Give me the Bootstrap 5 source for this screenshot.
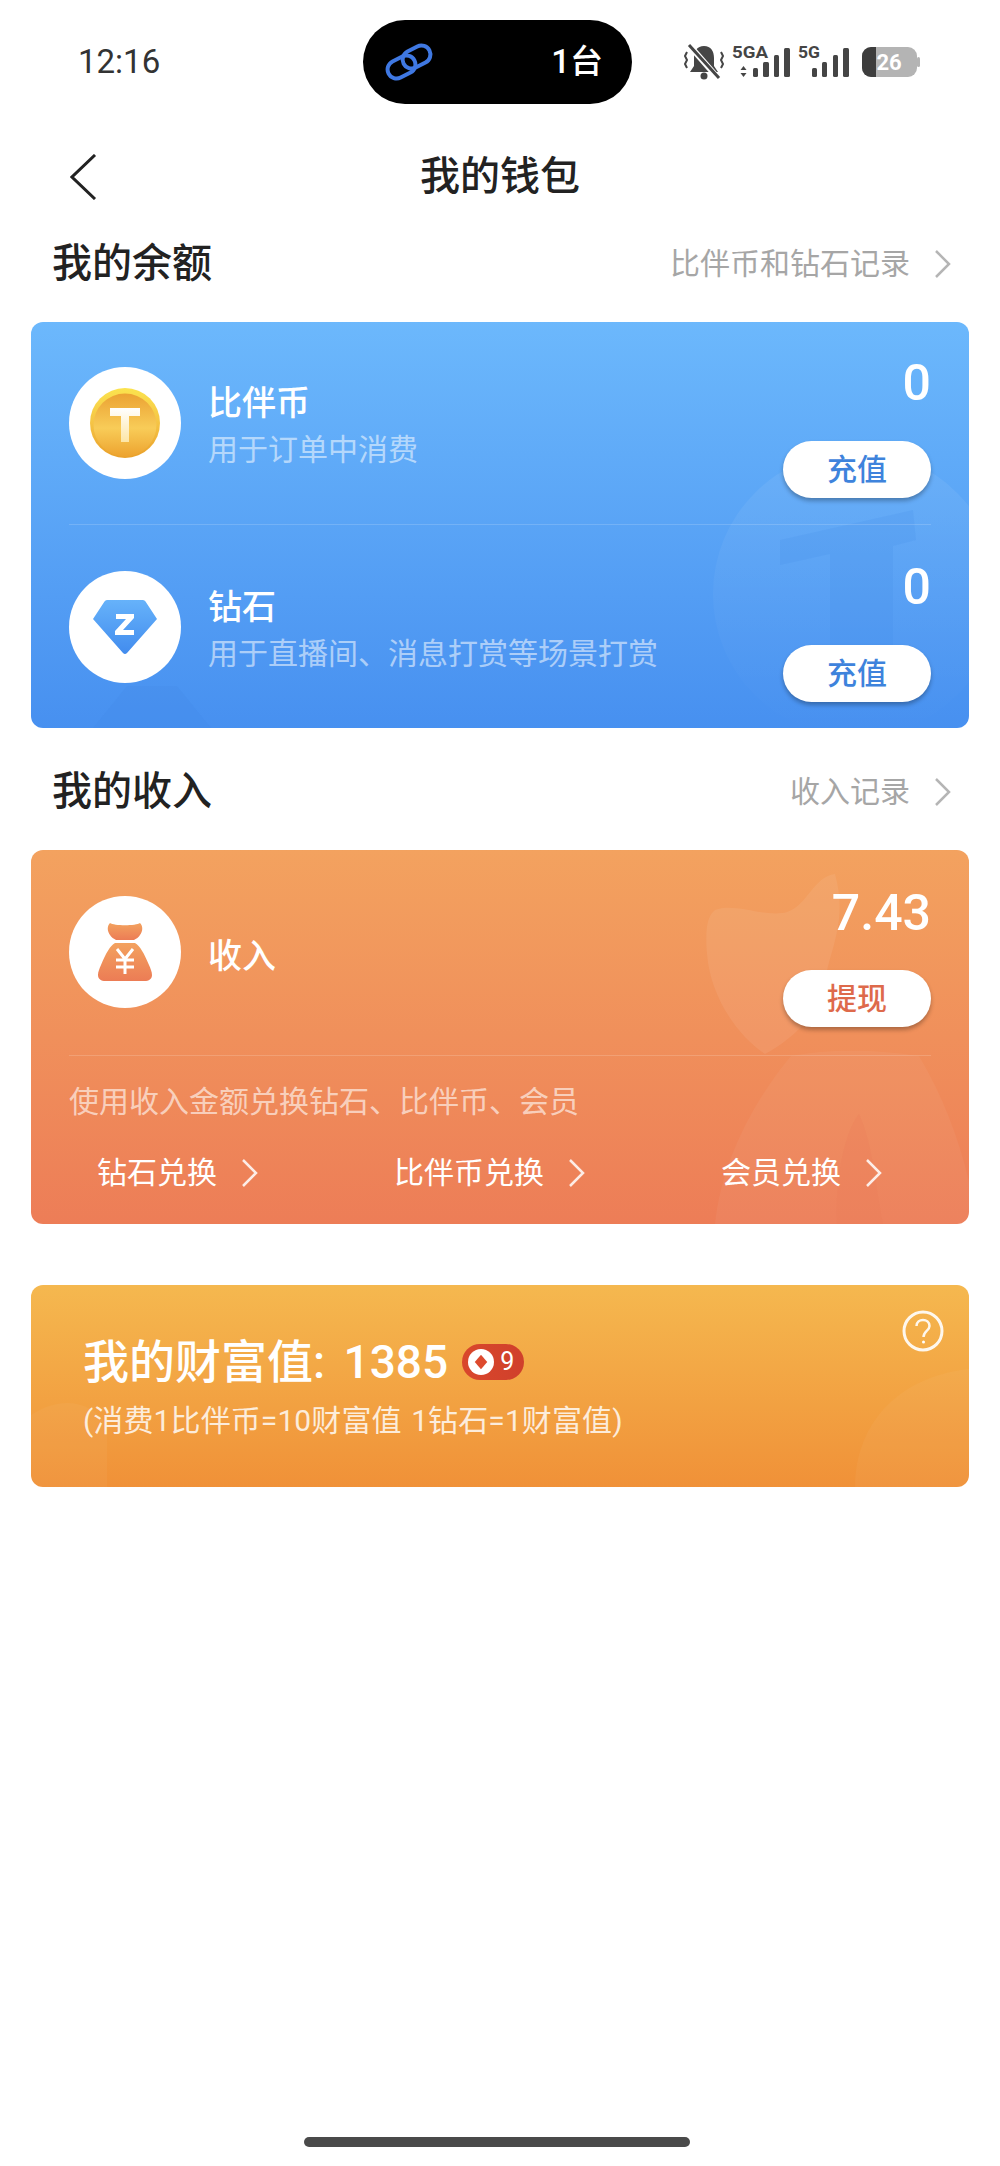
<!DOCTYPE html>
<html lang="zh-CN">
<head>
  <meta charset="UTF-8" />
  <meta name="viewport" content="width=device-width, initial-scale=1" />
  <title>我的钱包</title>
  <link href="https://cdn.jsdelivr.net/npm/bootstrap@5.3.2/dist/css/bootstrap.min.css" rel="stylesheet">
  <style>
    body { width: 1000px; height: 2166px; background: #fff; color: #222; overflow: hidden; position: relative;
      font-family: Roboto, "Noto Sans CJK SC", sans-serif; }
    .statbar { height: 124px; padding-top: 20px; align-items: flex-start; }
    .clock { width: 363px; height: 84px; padding-left: 78px; font-size: 33px; color: #333; line-height: 84px; }
    .island { width: 269px; height: 84px; background: #000; border-radius: 42px; color: #fff; padding: 0 29px 0 22px; }
    .island span { font-size: 33px; font-weight: 500; }
    .stat-icons { margin-left: 48px; margin-top: 20px; }
    .navrow { height: 104px; padding-top: 2px; }
    .nav-side { width: 200px; padding-left: 70px; }
    .nav-title { font-size: 40px; font-weight: 500; line-height: 1; }
    .sec-head { height: 68px; padding: 4px 48px 0 52px; margin-bottom: 26px; }
    .sec-title { font-size: 40px; font-weight: 500; line-height: 1; }
    .sec-link { font-size: 30px; color: #a6a6a6; line-height: 1; }
    .wallet { margin: 0 31px; border: 0; border-radius: 12px; overflow: hidden; color: #fff; }
    .wallet-blue { height: 406px; padding: 33px 38px 0; background: linear-gradient(#6cb8fc, #4790f0); margin-bottom: 28px; }
    .wallet-orange { height: 374px; padding: 35px 38px 0; background: linear-gradient(#f3a25f, #ed7d57); margin-bottom: 61px; }
    .wallet-gold { height: 202px; padding: 49px 52px 0; background: linear-gradient(#f5b84f, #f09138); }
    .decor { position: absolute; left: 0; top: 0; width: 100%; height: 100%; }
    .wallet-row { height: 143px; position: relative; }
    .wallet-orange .wallet-row { height: 142px; }
    .avatar { width: 112px; height: 112px; background: #fff; border-radius: 50%; margin-top: 12px; margin-right: 27px; }
    .wallet-orange .avatar { margin-top: 11px; }
    .item-name { font-size: 34px; font-weight: 500; line-height: 40px; }
    .item-desc { font-size: 30px; line-height: 40px; color: rgba(255, 255, 255, .55); margin-top: 7px; }
    .item-text { margin-top: 28px; }
    .amount { font-size: 50px; font-weight: 500; line-height: 56px; }
    .pill-btn { width: 148px; height: 57px; padding: 0; border: 0; background: #fff; font-size: 30px; font-weight: 500; line-height: 57px;
      box-shadow: 0 3px 4px rgba(0, 0, 0, .28); }
    .pill-blue { color: #3e83dc; }
    .pill-orange { color: #de6a4b; }
    .split { height: 1px; background: rgba(255, 255, 255, .16); position: relative; }
    .split-blue { margin: 26px 0 34px; }
    .split-orange { margin: 28px 0 26px; }
    .swap-note { font-size: 30px; line-height: 40px; color: rgba(255, 255, 255, .62); position: relative; white-space: nowrap; }
    .swap-links { margin-top: 31px; padding: 0 48px 0 28px; position: relative; font-size: 30px; line-height: 40px; }
    .gold-title { font-size: 46px; font-weight: 500; line-height: 56px; position: relative; white-space: pre; word-spacing: 7px; }
    .gold-note { font-size: 30px; line-height: 44px; margin-top: 9px; color: rgba(255, 255, 255, .82); position: relative; white-space: nowrap; word-spacing: 2px; letter-spacing: .1px; }
    .rank-tag { width: 62px; height: 36px; border-radius: 18px; background: linear-gradient(90deg, #d9472c, #d0402b); margin-left: 14px; padding-left: 6px; }
    .rank-tag b { font-size: 25px; font-weight: 400; line-height: 36px; margin-left: 6px; }
    .help-mark { position: absolute; right: 25px; top: 25px; }
    .home-bar { position: absolute; left: 304px; top: 2137px; width: 386px; height: 10px; border-radius: 5px; background: #4a4a4a; }
  </style>
</head>
<body>
  <!-- status bar -->
  <div class="statbar d-flex">
    <div class="clock">12:16</div>
    <div class="island d-flex align-items-center justify-content-between">
      <svg width="50" height="40" viewBox="0 0 50 40" fill="none" stroke="#3f78e2" stroke-width="4">
        <rect x="2" y="16" width="29" height="18" rx="9" transform="rotate(-27 16.500 25)"/>
        <rect x="17" y="6" width="29" height="18" rx="9" transform="rotate(-27 31.500 15)"/>
      </svg>
      <span>1台</span>
    </div>
    <svg class="stat-icons" width="260" height="44" viewBox="680 40 260 44" fill="#454545">
      <path d="M704 46c7 0 10 5 10 12v8l4 6h-28l4-6v-8c0-7 3-12 10-12z"/>
      <circle cx="704" cy="76" r="3.500"/>
      <path d="M689 45l28 32" stroke="#fff" stroke-width="6"/>
      <path d="M689 45l30 33" stroke="#454545" stroke-width="3"/>
      <path d="M687 52l-2 4 2 4-2 4 2 4M721 52l2 4-2 4 2 4-2 4" fill="none" stroke="#454545" stroke-width="2"/>
      <text x="732" y="58" font-family="Roboto" font-weight="700" font-size="16" textLength="36" lengthAdjust="spacingAndGlyphs">5GA</text>
      <path d="M743.500 66l3 4h-6zM743.500 77l3-4h-6z"/>
      <rect x="753" y="68" width="5" height="9" rx="1.500"/>
      <rect x="763" y="62" width="6" height="15" rx="1.500"/>
      <rect x="774" y="55" width="5" height="22" rx="1.500"/>
      <rect x="784" y="48" width="6" height="29" rx="1.500"/>
      <text x="798" y="58" font-family="Roboto" font-weight="700" font-size="16" textLength="22" lengthAdjust="spacingAndGlyphs">5G</text>
      <rect x="812" y="68" width="5" height="9" rx="1.500"/>
      <rect x="822" y="62" width="5" height="15" rx="1.500"/>
      <rect x="833" y="55" width="5" height="22" rx="1.500"/>
      <rect x="843" y="48" width="6" height="29" rx="1.500"/>
      <rect x="862" y="47" width="55" height="30" rx="9" fill="#b4b4b4"/>
      <path d="M871 47h5v30h-5a9 9 0 0 1-9-9v-12a9 9 0 0 1 9-9z" fill="#3d3d3d"/>
      <rect x="917" y="57" width="3" height="10" rx="1.500" fill="#b4b4b4"/>
      <text x="889" y="70" text-anchor="middle" font-family="Roboto" font-weight="700" font-size="22" fill="#fff">26</text>
    </svg>
  </div>

  <!-- title -->
  <div class="navrow d-flex align-items-center justify-content-between">
    <div class="nav-side">
      <svg class="d-block" width="27" height="46" viewBox="0 0 27 46" fill="none" stroke="#222" stroke-width="3"><path d="M25 1L2 23l23 22"/></svg>
    </div>
    <div class="nav-title">我的钱包</div>
    <div class="nav-side"></div>
  </div>

  <!-- balance -->
  <div class="sec-head d-flex align-items-center justify-content-between">
    <div class="sec-title">我的余额</div>
    <div class="sec-link d-flex align-items-center gap-4">比伴币和钻石记录
      <svg width="18" height="30" viewBox="0 0 18 30" fill="none" stroke="#b5b5b5" stroke-width="2.500"><path d="M2 2l13 13L2 28"/></svg>
    </div>
  </div>

  <div class="card wallet wallet-blue">
    <svg class="decor" viewBox="0 0 938 406" preserveAspectRatio="none">
      <defs><linearGradient id="blueFade" x1="0" y1="0" x2="0" y2="1"><stop offset="0" stop-color="#fff" stop-opacity=".07"/><stop offset=".7" stop-color="#fff" stop-opacity=".02"/><stop offset="1" stop-color="#fff" stop-opacity="0"/></linearGradient></defs>
      <circle cx="825" cy="272" r="143" fill="url(#blueFade)"/>
      <path d="M749 218l133-30 3 30-23 6v100h-63V232l-50 11z" fill="#3f86e6" opacity=".16"/>
      <path d="M62 406l34-42h50l34 42z" fill="#3f86e6" opacity=".2"/>
    </svg>
    <div class="wallet-row d-flex justify-content-between">
      <div class="d-flex align-items-start">
        <div class="avatar d-flex align-items-center justify-content-center">
          <svg width="72" height="72" viewBox="0 0 72 72">
            <defs>
              <linearGradient id="coinRim" x1="0" y1="0" x2="0" y2="1"><stop offset="0" stop-color="#fbe34e"/><stop offset=".5" stop-color="#f5c445"/><stop offset="1" stop-color="#e9a02a"/></linearGradient>
              <linearGradient id="coinFace" x1="0" y1="0" x2="0" y2="1"><stop offset="0" stop-color="#eba233"/><stop offset=".55" stop-color="#f8cc58"/><stop offset="1" stop-color="#eda32f"/></linearGradient>
              <linearGradient id="coinT" x1="0" y1="0" x2="0" y2="1"><stop offset="0" stop-color="#fff"/><stop offset="1" stop-color="#fde6a6"/></linearGradient>
            </defs>
            <circle cx="36" cy="36" r="35" fill="url(#coinRim)"/>
            <circle cx="36" cy="38" r="31.500" fill="url(#coinFace)"/>
            <path d="M21 21h30v8H40v26h-8V29H21z" fill="url(#coinT)"/>
          </svg>
        </div>
        <div class="item-text">
          <div class="item-name">比伴币</div>
          <div class="item-desc">用于订单中消费</div>
        </div>
      </div>
      <div class="d-flex flex-column align-items-end justify-content-between">
        <div class="amount">0</div>
        <button type="button" class="btn rounded-pill pill-btn pill-blue">充值</button>
      </div>
    </div>
    <div class="split split-blue"></div>
    <div class="wallet-row d-flex justify-content-between">
      <div class="d-flex align-items-start">
        <div class="avatar d-flex align-items-center justify-content-center">
          <svg width="66" height="56" viewBox="0 0 66 56">
            <defs><linearGradient id="gem" x1="0" y1="0" x2="0" y2="1"><stop offset="0" stop-color="#66b2fa"/><stop offset="1" stop-color="#428cee"/></linearGradient></defs>
            <path d="M15 1h36a3 3 0 0 1 2.500 1.500L65 20 35 54a3 3 0 0 1-4 0L1 20 12.500 2.500A3 3 0 0 1 15 1z" fill="url(#gem)"/>
            <path d="M24 15h18v4L31 31h11v5H23v-4l11-12H24z" fill="#fff"/>
          </svg>
        </div>
        <div class="item-text">
          <div class="item-name">钻石</div>
          <div class="item-desc">用于直播间、消息打赏等场景打赏</div>
        </div>
      </div>
      <div class="d-flex flex-column align-items-end justify-content-between">
        <div class="amount">0</div>
        <button type="button" class="btn rounded-pill pill-btn pill-blue">充值</button>
      </div>
    </div>
  </div>

  <!-- income -->
  <div class="sec-head d-flex align-items-center justify-content-between">
    <div class="sec-title">我的收入</div>
    <div class="sec-link d-flex align-items-center gap-4">收入记录
      <svg width="18" height="30" viewBox="0 0 18 30" fill="none" stroke="#b5b5b5" stroke-width="2.500"><path d="M2 2l13 13L2 28"/></svg>
    </div>
  </div>

  <div class="card wallet wallet-orange">
    <svg class="decor" viewBox="0 0 938 374" preserveAspectRatio="none">
      <path d="M684 60c20-8 50 8 72 2 20-6 26-35 48-38 14 50-8 80-10 110-2 30-40 60-60 70-30-20-55-60-58-100-2-24 0-38 8-44z" fill="#fff" opacity=".07"/>
      <path d="M760 206c40-8 90-6 128 0 30 50 50 110 58 168H684c6-60 36-120 76-168z" fill="#fff" opacity=".045"/>
      <path d="M806 374c-2-40 6-90 22-110 14 30 16 70 24 110z" fill="#ed7d57" opacity=".25"/>
    </svg>
    <div class="wallet-row d-flex justify-content-between">
      <div class="d-flex align-items-start">
        <div class="avatar d-flex align-items-center justify-content-center">
          <svg width="58" height="60" viewBox="0 0 58 60">
            <defs><linearGradient id="bag" x1="0" y1="0" x2="0" y2="1"><stop offset="0" stop-color="#f3a25f"/><stop offset="1" stop-color="#ec7c55"/></linearGradient></defs>
            <path d="M14 1c4 3 26 3 30 0 3 3 3 8 0 12-1 2-4 4-6 5H20c-2-1-5-3-6-5-3-4-3-9 0-12z" fill="url(#bag)"/>
            <path d="M19 21h20c5 3 9 10 14 22 3 7 6 14-3 16H8c-9-2-6-9-3-16 5-12 9-19 14-22z" fill="url(#bag)"/>
            <path d="M21 27l8 10 8-10M20 38h18M20 45h18M29 37v15" fill="none" stroke="#fff" stroke-width="3"/>
          </svg>
        </div>
        <div class="item-text mt-0 align-self-center">
          <div class="item-name">收入</div>
        </div>
      </div>
      <div class="d-flex flex-column align-items-end justify-content-between">
        <div class="amount">7.43</div>
        <button type="button" class="btn rounded-pill pill-btn pill-orange">提现</button>
      </div>
    </div>
    <div class="split split-orange"></div>
    <div class="swap-note">使用收入金额兑换钻石、比伴币、会员</div>
    <div class="swap-links d-flex justify-content-between">
      <div class="d-flex align-items-center gap-4">钻石兑换 <svg width="18" height="30" viewBox="0 0 18 30" fill="none" stroke="#fff" stroke-opacity=".85" stroke-width="2.500"><path d="M2 2l13 13L2 28"/></svg></div>
      <div class="d-flex align-items-center gap-4">比伴币兑换 <svg width="18" height="30" viewBox="0 0 18 30" fill="none" stroke="#fff" stroke-opacity=".85" stroke-width="2.500"><path d="M2 2l13 13L2 28"/></svg></div>
      <div class="d-flex align-items-center gap-4">会员兑换 <svg width="18" height="30" viewBox="0 0 18 30" fill="none" stroke="#fff" stroke-opacity=".85" stroke-width="2.500"><path d="M2 2l13 13L2 28"/></svg></div>
    </div>
  </div>

  <!-- wealth -->
  <div class="card wallet wallet-gold">
    <svg class="decor" viewBox="0 0 938 202" preserveAspectRatio="none">
      <path d="M0 130c30-20 60-14 76 10v62H0z" fill="#fff" opacity=".04"/>
      <path d="M824 202c0-60 40-110 114-118v118z" fill="#fff" opacity=".04"/>
    </svg>
    <div class="gold-title d-flex align-items-center"><span>我的财富值: 1385</span>
      <span class="rank-tag d-inline-flex align-items-center">
        <svg width="26" height="26" viewBox="0 0 25 25"><circle cx="12.500" cy="12.500" r="12.500" fill="#fff"/><path d="M12.500 5.500l6 7-6 7-6-7z" fill="#dd4a2e"/></svg>
        <b>9</b>
      </span>
    </div>
    <div class="gold-note">(消费1比伴币=10财富值 1钻石=1财富值)</div>
    <svg class="help-mark" width="42" height="42" viewBox="0 0 42 42" fill="none" stroke="#fff" stroke-opacity=".9" stroke-width="3">
      <circle cx="21" cy="21" r="19"/>
      <path d="M14.500 16c0-8 13-8 13 0 0 5-6 5-6 11" stroke-width="2.500"/>
      <circle cx="21.500" cy="32" r="1.500" fill="#fff" stroke="none"/>
    </svg>
  </div>

  <div class="home-bar"></div>

  <script src="https://cdn.jsdelivr.net/npm/bootstrap@5.3.2/dist/js/bootstrap.bundle.min.js"></script>
</body>
</html>
